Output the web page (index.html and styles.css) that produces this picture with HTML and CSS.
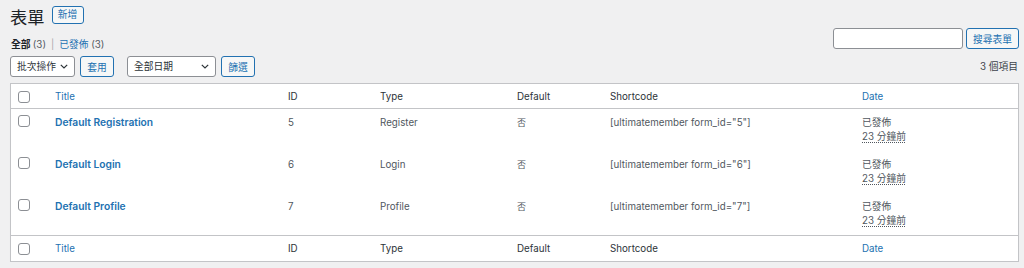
FILE: index.html
```html
<!DOCTYPE html>
<html lang="zh-Hant">
<head>
<meta charset="utf-8">
<link rel="stylesheet" href="styles.css">
</head>
<body>
<div class="wrap">
  <div class="title-row">
    <h1 class="page-title">表單</h1>
    <a class="btn btn-new">新增</a>
  </div>
  <div class="row2">
    <ul class="subsubsub">
      <li class="current">全部 <span class="count">(3)</span></li>
      <li class="sep">|</li>
      <li><a class="link">已發佈</a> <span class="count">(3)</span></li>
    </ul>
    <div class="search-box">
      <input class="search-input" type="text">
      <button class="btn btn-search">搜尋表單</button>
    </div>
  </div>
  <div class="tablenav">
    <div class="actions">
      <div class="select select-bulk"><span>批次操作</span><svg class="chev" width="8" height="5" viewBox="0 0 8 5"><path d="M0.8 0.8 L4 4 L7.2 0.8" fill="none" stroke="#2c3338" stroke-width="1.2"/></svg></div>
      <button class="btn btn-small">套用</button>
      <div class="select select-date"><span>全部日期</span><svg class="chev" width="8" height="5" viewBox="0 0 8 5"><path d="M0.8 0.8 L4 4 L7.2 0.8" fill="none" stroke="#2c3338" stroke-width="1.2"/></svg></div>
      <button class="btn btn-small">篩選</button>
    </div>
    <div class="displaying-num">3 個項目</div>
  </div>
  <table class="list-table">
    <colgroup>
      <col class="c-cb"><col class="c-title"><col class="c-id"><col class="c-type"><col class="c-default"><col class="c-short"><col class="c-date">
    </colgroup>
    <thead>
      <tr class="head-row">
        <th class="cb"><span class="checkbox"></span></th>
        <th><a class="link">Title</a></th>
        <th>ID</th>
        <th>Type</th>
        <th>Default</th>
        <th>Shortcode</th>
        <th><a class="link">Date</a></th>
      </tr>
    </thead>
    <tbody>
      <tr class="body-row">
        <td class="cb"><span class="checkbox"></span></td>
        <td><a class="link row-title">Default Registration</a></td>
        <td>5</td>
        <td>Register</td>
        <td class="cjk">否</td>
        <td>[ultimatemember form_id="5"]</td>
        <td>已發佈<br><abbr class="ago">23 分鐘前</abbr></td>
      </tr>
      <tr class="body-row">
        <td class="cb"><span class="checkbox"></span></td>
        <td><a class="link row-title">Default Login</a></td>
        <td>6</td>
        <td>Login</td>
        <td class="cjk">否</td>
        <td>[ultimatemember form_id="6"]</td>
        <td>已發佈<br><abbr class="ago">23 分鐘前</abbr></td>
      </tr>
      <tr class="body-row">
        <td class="cb"><span class="checkbox"></span></td>
        <td><a class="link row-title">Default Profile</a></td>
        <td>7</td>
        <td>Profile</td>
        <td class="cjk">否</td>
        <td>[ultimatemember form_id="7"]</td>
        <td>已發佈<br><abbr class="ago">23 分鐘前</abbr></td>
      </tr>
    </tbody>
    <tfoot>
      <tr class="foot-row">
        <th class="cb"><span class="checkbox"></span></th>
        <th><a class="link">Title</a></th>
        <th>ID</th>
        <th>Type</th>
        <th>Default</th>
        <th>Shortcode</th>
        <th><a class="link">Date</a></th>
      </tr>
    </tfoot>
  </table>
</div>
</body>
</html>
```

FILE: styles.css
```css
html, body {
  margin: 0;
  padding: 0;
  background: #f0f0f1;
}
body {
  font-family: Inter, "Noto Sans CJK TC", sans-serif;
  font-size: 9.75px;
  line-height: 13.5px;
  color: #3c434a;
}
.wrap {
  padding: 7px 5px 0 10px;
}
.title-row {
  display: flex;
  align-items: flex-start;
  gap: 7px;
  height: 20px;
}
.page-title {
  margin: 0;
  font-size: 17.25px;
  line-height: 21px;
  font-weight: 400;
  color: #1d2327;
}
.btn {
  display: inline-flex;
  align-items: center;
  justify-content: center;
  box-sizing: border-box;
  border: 1px solid #2271b1;
  border-radius: 3px;
  background: #f6f7f7;
  color: #2271b1;
  font-family: inherit;
  font-size: 9.75px;
  padding: 0 7px;
  margin: 0;
  cursor: pointer;
}
.btn-new {
  height: 18px;
  width: 32px;
  margin-top: -1px;
  padding: 0;
}
.row2 {
  display: flex;
  justify-content: space-between;
  align-items: flex-start;
  height: 21px;
  margin-top: 1px;
}
.subsubsub {
  list-style: none;
  margin: 10px 0 0 1px;
  padding: 0;
  display: flex;
  gap: 4px;
  color: #646970;
}
.subsubsub .current {
  color: #1d2327;
  font-weight: 700;
}
.subsubsub .count {
  font-weight: 400;
  color: #50575e;
}
.subsubsub .sep {
  color: #a7aaad;
  margin: 0 1px;
}
.link {
  color: #2271b1;
  text-decoration: none;
}
.search-box {
  display: flex;
  gap: 3px;
}
.search-input {
  box-sizing: border-box;
  width: 130px;
  height: 21px;
  border: 1px solid #8c8f94;
  border-radius: 3px;
  background: #fff;
  margin: 0;
  padding: 0 6px;
}
.btn-search {
  height: 21px;
  width: 53px;
  padding: 0;
}
.tablenav {
  display: flex;
  justify-content: space-between;
  align-items: center;
  height: 21px;
  margin-top: 7px;
}
.actions {
  display: flex;
  align-items: center;
  height: 21px;
}
.select {
  box-sizing: border-box;
  height: 21px;
  border: 1px solid #8c8f94;
  border-radius: 3px;
  background: #fff;
  display: flex;
  align-items: center;
  justify-content: space-between;
  padding: 0 6px 0 6px;
  color: #2c3338;
}
.select-bulk {
  width: 65px;
}
.select-date {
  width: 89px;
  margin-left: 13px;
}
.chev {
  display: block;
}
.btn-small {
  height: 21px;
  width: 34px;
  padding: 0;
  margin-left: 5px;
}
.displaying-num {
  color: #3c434a;
  margin-right: 1px;
}
.list-table {
  margin-top: 6px;
  width: 100%;
  table-layout: fixed;
  border-collapse: separate;
  border-spacing: 0;
  border: 1px solid #c3c4c7;
  background: #fff;
  box-shadow: 0 1px 1px rgba(0, 0, 0, 0.04);
}
.c-cb { width: 34px; }
.c-title { width: 233px; }
.c-id { width: 92px; }
.c-type { width: 137px; }
.c-default { width: 93px; }
.c-short { width: 252px; }
.c-date { width: 166px; }
.list-table th {
  font-weight: 400;
  text-align: left;
  color: #2c3338;
  padding: 1px 10px 0;
  vertical-align: middle;
}
.head-row th {
  height: 23px;
  border-bottom: 1px solid #c3c4c7;
}
.foot-row th {
  height: 24px;
  border-top: 1px solid #c3c4c7;
}
.list-table td {
  color: #50575e;
  padding: 7px 10px 0 10px;
  vertical-align: top;
  white-space: nowrap;
}
.list-table td.cjk {
  font-size: 9px;
}
.body-row td {
  height: 35px;
}
.list-table .cb {
  padding-left: 7px;
  padding-right: 0;
}
.list-table th.cb .checkbox {
  margin-top: 0;
}
.checkbox {
  display: block;
  box-sizing: border-box;
  width: 12px;
  height: 12px;
  border: 1px solid #8c8f94;
  border-radius: 3px;
  background: #fff;
}
.list-table td.cb .checkbox {
  margin-top: -1px;
}
.row-title {
  font-weight: 600;
  font-size: 10.25px;
}
.ago {
  text-decoration: underline dotted;
  text-underline-offset: 2px;
}
```
